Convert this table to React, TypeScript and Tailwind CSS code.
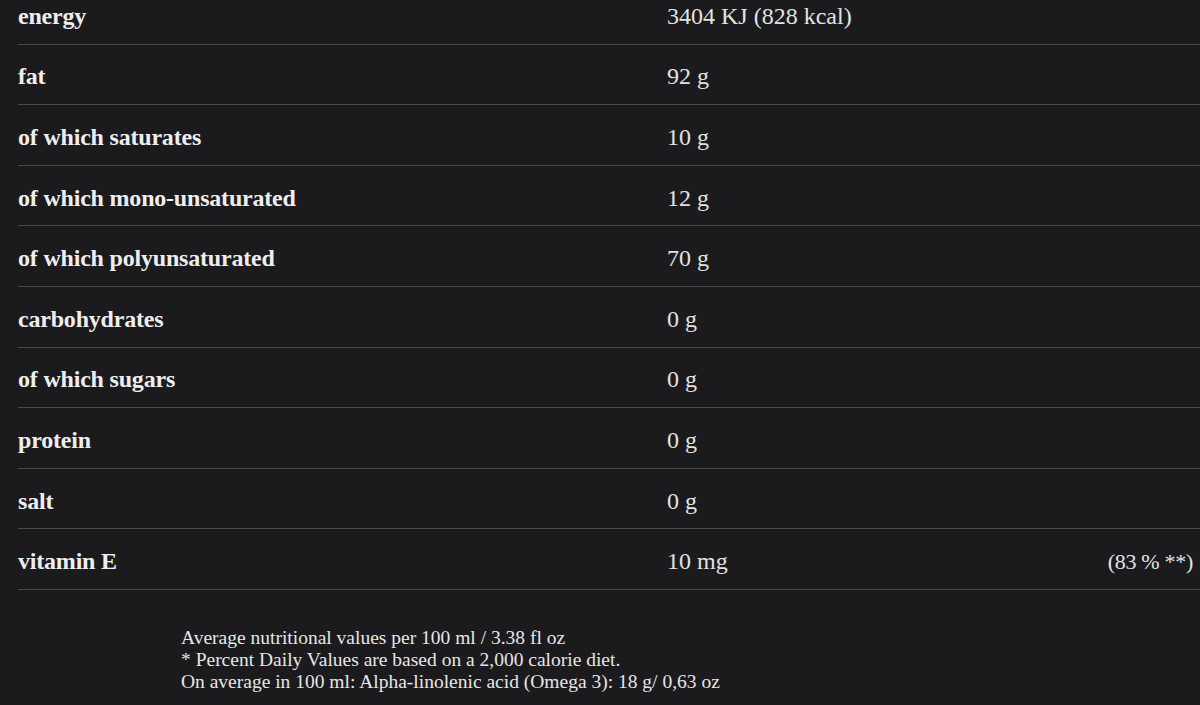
const rows: { label: string; value: string; pct?: string }[] = [
  { label: "energy", value: "3404 KJ (828 kcal)" },
  { label: "fat", value: "92 g" },
  { label: "of which saturates", value: "10 g" },
  { label: "of which mono-unsaturated", value: "12 g" },
  { label: "of which polyunsaturated", value: "70 g" },
  { label: "carbohydrates", value: "0 g" },
  { label: "of which sugars", value: "0 g" },
  { label: "protein", value: "0 g" },
  { label: "salt", value: "0 g" },
  { label: "vitamin E", value: "10 mg", pct: "(83 % **)" },
];

export default function App() {
  return (
    <main
      className="w-[1200px] h-[705px] overflow-hidden bg-[#1b1b1d] text-[#ececec]"
      style={{ fontFamily: '"Liberation Serif", "DejaVu Serif", serif' }}
    >
      <div className="-mt-[16px] pl-[18px]">
        {rows.map((r) => (
          <div
            key={r.label}
            className="flex items-center h-[60.6px] pt-[4px] border-b border-[#4a4a4c] text-[24px]"
          >
            <div className="w-[649px] font-bold tracking-[-0.2px] text-[#eeeeee]">{r.label}</div>
            <div className="flex-1 text-[#e2e2e2]">{r.value}</div>
            {r.pct && <div className="pr-[7px] text-[22px] text-[#e2e2e2] tracking-[-0.3px]">{r.pct}</div>}
          </div>
        ))}
      </div>
      <div className="mt-[37px] ml-[181px] text-[19.5px] leading-[22px] text-[#e6e6e6]">
        <p>Average nutritional values per 100 ml / 3.38 fl oz</p>
        <p>* Percent Daily Values are based on a 2,000 calorie diet.</p>
        <p>On average in 100 ml: Alpha-linolenic acid (Omega 3): 18 g/ 0,63 oz</p>
      </div>
    </main>
  );
}
